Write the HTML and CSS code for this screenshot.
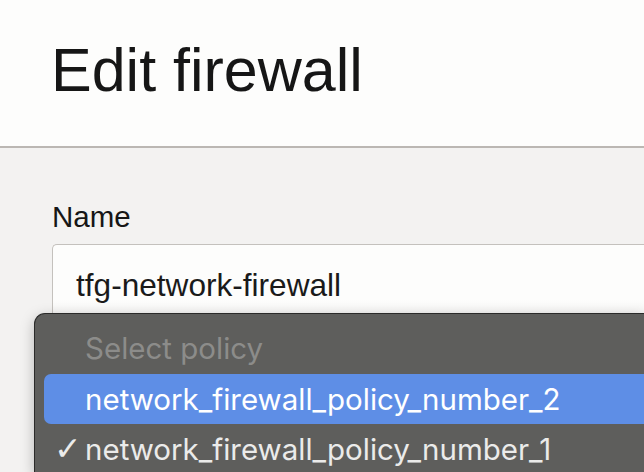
FILE: index.html
```html
<!DOCTYPE html>
<html>
<head>
<title>Edit firewall</title>
<link rel="stylesheet" href="styles.css">
</head>
<body>

<div class="page_header">
<h1 class="page_title">Edit firewall</h1>
</div>

<div class="form_area">
<label class="field_label" for="fw_name">Name</label>
<div class="text_box" id="fw_name">tfg-network-firewall</div>
</div>

<!-- native select popup, open over the form -->
<div class="policy_menu">
<div class="policy_option placeholder">Select policy</div>
<div class="policy_option hovered">network_firewall_policy_number_2</div>
<div class="policy_option"><span class="check">&#10003;</span>network_firewall_policy_number_1</div>
</div>

</body>
</html>
```

FILE: styles.css
```css
html, body {
	margin:0;
	padding:0;
	height:100%;
	background-color:#f3f2f1;
	font-family:"Liberation Sans", Arial, sans-serif;
	color:#161616;
	overflow:hidden;
}
.page_header {
	background-color:#fdfdfc;
	border-bottom:2px solid #bbb7b3;
	height:148px;
	box-sizing:border-box;
	padding:36px 0 0 51px;
}
.page_title {
	margin:0;
	font-weight:normal;
	font-size:61px;
	line-height:69px;
}
.form_area {
	padding:52px 0 0 52px;
	display:flex;
	flex-direction:column;
}
.field_label {
	font-size:29.5px;
	line-height:34px;
	margin-bottom:10px;
}
.text_box {
	background:linear-gradient(#fdfdfc 70%, #f1f0ef);
	border:1px solid #c4c1bd;
	border-right:none;
	border-radius:5px 0 0 5px;
	height:80px;
	padding:22px 0 0 23px;
	box-sizing:border-box;
	font-size:31.6px;
	line-height:36px;
	color:#1a1a1a;
}
.policy_menu {
	position:absolute;
	left:34px;
	top:313px;
	right:0;
	height:159px;
	background-color:#5e5e5c;
	border:1px solid #2b2b2a;
	border-right:none;
	border-bottom:none;
	border-radius:11px 0 0 0;
	box-shadow:0 4px 14px rgba(0,0,0,0.25);
	padding:9px 0 0 9px;
	box-sizing:border-box;
	font-family:Inter, "Liberation Sans", sans-serif;
}
.policy_option {
	position:relative;
	height:50px;
	line-height:50px;
	padding-left:41px;
	font-size:29.5px;
	color:#ebebea;
	white-space:nowrap;
	border-radius:7px 0 0 7px;
}
.policy_option.placeholder {
	color:#8c8c8a;
	height:51px;
}
.policy_option.hovered {
	background-color:#5e8ee6;
	color:#ffffff;
}
.check {
	position:absolute;
	left:10px;
	font-size:33px;
	font-family:"DejaVu Sans", sans-serif;
}
```
